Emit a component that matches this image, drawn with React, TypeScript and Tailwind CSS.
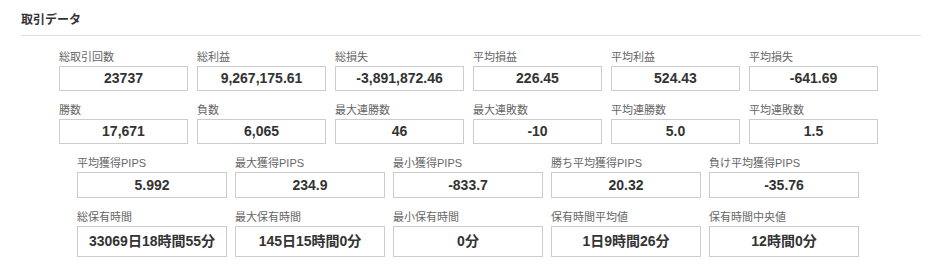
import React from 'react';

type Stat = {
    label: string;
    value: string;
};

const rowA: Stat[][] = [
    [
        { label: '総取引回数', value: '23737' },
        { label: '総利益', value: '9,267,175.61' },
        { label: '総損失', value: '-3,891,872.46' },
        { label: '平均損益', value: '226.45' },
        { label: '平均利益', value: '524.43' },
        { label: '平均損失', value: '-641.69' },
    ],
    [
        { label: '勝数', value: '17,671' },
        { label: '負数', value: '6,065' },
        { label: '最大連勝数', value: '46' },
        { label: '最大連敗数', value: '-10' },
        { label: '平均連勝数', value: '5.0' },
        { label: '平均連敗数', value: '1.5' },
    ],
];

const pipsRow: Stat[] = [
    { label: '平均獲得PIPS', value: '5.992' },
    { label: '最大獲得PIPS', value: '234.9' },
    { label: '最小獲得PIPS', value: '-833.7' },
    { label: '勝ち平均獲得PIPS', value: '20.32' },
    { label: '負け平均獲得PIPS', value: '-35.76' },
];

const timeRow: Stat[] = [
    { label: '総保有時間', value: '33069日18時間55分' },
    { label: '最大保有時間', value: '145日15時間0分' },
    { label: '最小保有時間', value: '0分' },
    { label: '保有時間平均値', value: '1日9時間26分' },
    { label: '保有時間中央値', value: '12時間0分' },
];

// One labelled value box
const StatBox = ({ stat, width, height }: { stat: Stat; width: string; height: string }) => (
    <div className={width}>
        <div className="mb-[1px] text-[11px] leading-[15px] text-[#666]">{stat.label}</div>
        <div
            className={`flex items-center justify-center border border-[#ccc] bg-white text-[14px] font-bold text-[#333] ${height}`}
        >
            {stat.value}
        </div>
    </div>
);

export default function App() {
    return (
        <div
            className="min-h-[271px] bg-white px-[21px] pt-[11px] pr-[22px]"
            style={{ fontFamily: '"Liberation Sans", Arial, "Noto Sans CJK JP", sans-serif' }}
        >
            {/* Section title */}
            <h2 className="border-b border-[#ddd] pb-[6px] text-[12px] font-bold leading-[18px] text-[#333]">
                取引データ
            </h2>

            <div className="mt-[14px] flex flex-col gap-[12px]">
                {rowA.map((row, i) => (
                    <div key={i} className="ml-[38px] flex gap-[9px]">
                        {row.map((s) => (
                            <StatBox key={s.label} stat={s} width="w-[129px]" height="h-[25px]" />
                        ))}
                    </div>
                ))}

                <div className="ml-[56px] flex gap-[8px]">
                    {pipsRow.map((s) => (
                        <StatBox key={s.label} stat={s} width="w-[150px]" height="h-[26px]" />
                    ))}
                </div>

                <div className="ml-[56px] flex gap-[8px]">
                    {timeRow.map((s) => (
                        <StatBox key={s.label} stat={s} width="w-[150px]" height="h-[31px]" />
                    ))}
                </div>
            </div>
        </div>
    );
}
